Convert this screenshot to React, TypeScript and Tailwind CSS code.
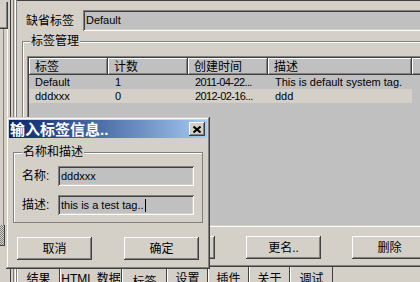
const raised =
  'shadow-[inset_-1px_-1px_0_#404040,inset_1px_1px_0_#ffffff,inset_-2px_-2px_0_#808080]'
const sunken =
  'shadow-[inset_1px_1px_0_#808080,inset_-1px_-1px_0_#ffffff,inset_2px_2px_0_#404040,inset_-2px_-2px_0_#d4d0c8]'
const etched = 'border-t border-l border-[#808080] shadow-[inset_1px_1px_0_#ffffff]'

const columns = [
  { label: '标签', w: 'w-[79px]' },
  { label: '计数', w: 'w-[80px]' },
  { label: '创建时间', w: 'w-[80px]' },
  { label: '描述', w: 'w-[144px]' },
]

const rows = [
  { tag: 'Default', count: '1', created: '2011-04-22...', desc: 'This is default system tag.', active: false },
  { tag: 'dddxxx', count: '0', created: '2012-02-16...', desc: 'ddd', active: true },
]

const tabs = [
  { label: '结果', w: 'w-[43px]' },
  { label: 'HTML 数据', w: 'w-[62px]' },
  { label: '标签', w: 'w-[45px]', current: true },
  { label: '设置', w: 'w-[41px]' },
  { label: '插件', w: 'w-[41px]' },
  { label: '关于', w: 'w-[41px]' },
  { label: '调试', w: 'w-[43px]' },
]

function Button({ label, className = '' }: { label: string; className?: string }) {
  return (
    <div className={`flex h-[23px] w-[75px] shrink-0 items-center justify-center bg-[#d4d0c8] text-[12px] ${raised} ${className}`}>
      {label}
    </div>
  )
}

function LeftStrip() {
  return (
    <div className="flex h-full w-[17px] shrink-0">
      <div className="flex w-[8px] flex-col">
        <div className="h-[2px]" />
        <div className="h-[27px] border-r border-b border-[#404040] shadow-[inset_-1px_-1px_0_#808080]" />
        <div className="ml-[3px] w-[5px] flex-1 border-l border-[#808080] border-r border-r-white" />
        <div className="h-[21px] w-[5px] border-r border-b border-[#404040] bg-[repeating-conic-gradient(#808080_0_25%,#d4d0c8_0_50%)] bg-[length:2px_2px]" />
        <div className="h-[36px]" />
      </div>
      <div className="w-[2px]" />
      <div className="w-[1px] bg-[#404040]" />
      <div className="w-[2px]" />
      <div className="w-[1px] bg-[#808080]" />
      <div className="w-[1px]" />
      <div className="w-[1px] bg-white" />
      <div className="w-[1px] bg-[#808080]" />
    </div>
  )
}

function TagList() {
  return (
    <div className={`mt-[14px] ml-[4px] flex h-[171px] flex-col bg-[#c0c0c0] p-[2px] ${sunken}`}>
      <div className="flex h-[17px] shrink-0">
        {columns.map((c) => (
          <div key={c.label} className={`flex items-center pl-[6px] text-[12px] leading-[12px] ${c.w} ${raised}`}>
            {c.label}
          </div>
        ))}
        <div className={`flex-1 ${raised}`} />
      </div>
      {rows.map((r) => (
        <div
          key={r.tag}
          className={`flex h-[14px] w-[383px] items-center text-[11px] leading-[14px] ${r.active ? 'bg-[#d4d0c8]' : ''}`}
        >
          <span className="w-[79px] pl-[6px]">{r.tag}</span>
          <span className="w-[80px] pl-[7px]">{r.count}</span>
          <span className="w-[80px] pl-[7px] tracking-[-0.6px]">{r.created}</span>
          <span className="w-[144px] pl-[7px]">{r.desc}</span>
        </div>
      ))}
    </div>
  )
}

function TagDialog() {
  return (
    <div
      className={`absolute top-[117px] left-[6px] flex h-[152px] w-[204px] flex-col bg-[#d4d0c8] p-[3px] shadow-[inset_-1px_-1px_0_#404040,inset_1px_1px_0_#d4d0c8,inset_-2px_-2px_0_#808080,inset_2px_2px_0_#ffffff]`}
    >
      <div className="flex h-[18px] shrink-0 items-center justify-between bg-linear-to-r from-[#0a246a] to-[#a6caf0] pl-[1px] pr-[2px]">
        <span className="text-[15px] leading-[15px] font-bold text-white">输入标签信息..</span>
        <div className={`flex h-[14px] w-[16px] items-center justify-center bg-[#d4d0c8] ${raised}`}>
          <svg width="8" height="7" viewBox="0 0 8 7">
            <path d="M0.5 0.5 L7.5 6.5 M7.5 0.5 L0.5 6.5" stroke="#000" strokeWidth="2" />
          </svg>
        </div>
      </div>

      <div className={`relative mx-[4px] mt-[14px] flex h-[71px] flex-col gap-[9px] pt-[13px] pl-[8px] ${etched} border-r border-b shadow-[inset_1px_1px_0_#ffffff,1px_1px_0_#ffffff]`}>
        <span className="absolute -top-[8px] left-[8px] bg-[#d4d0c8] px-[1px] text-[12px] leading-[14px]">名称和描述</span>
        <div className="flex items-center">
          <span className="w-[36px] text-[12px]">名称:</span>
          <div className={`flex h-[20px] w-[136px] items-center bg-[#c0c0c0] pl-[3px] text-[11px] ${sunken}`}>dddxxx</div>
        </div>
        <div className="flex items-center">
          <span className="w-[36px] text-[12px]">描述:</span>
          <div className={`flex h-[20px] w-[136px] items-center bg-[#c0c0c0] pl-[3px] text-[11px] ${sunken}`}>
            this is a test tag..
            <span className="ml-[1px] h-[13px] w-[1px] bg-black" />
          </div>
        </div>
      </div>

      <div className="mt-[14px] ml-[8px] flex gap-[32px]">
        <Button label="取消" className="h-[22px]" />
        <Button label="确定" className="h-[22px]" />
      </div>
    </div>
  )
}

export default function App() {
  return (
    <div className="relative flex h-[282px] w-[420px] overflow-hidden bg-[#d4d0c8] font-['Liberation_Sans','Noto_Sans_CJK_SC',sans-serif] text-black">
      <LeftStrip />

      <div className="flex w-[440px] shrink-0 flex-col">
        <div className="flex flex-1 flex-col border-t border-[#404040]">
          {/* default tag */}
          <div className="flex items-center pt-[9px] pl-[9px]">
            <span className="w-[57px] text-[12px]">缺省标签</span>
            <div className={`flex h-[21px] flex-1 items-center bg-[#c0c0c0] pl-[3px] text-[11px] ${sunken}`}>Default</div>
          </div>

          {/* tag management group */}
          <div className={`relative mt-[10px] ml-[5px] flex flex-1 flex-col ${etched}`}>
            <span className="absolute -top-[8px] left-[7px] bg-[#d4d0c8] px-[1px] text-[12px] leading-[14px]">标签管理</span>
            <TagList />
            <div className="mt-[9px] ml-[11px] flex gap-[31px]">
              <Button label="新建.." />
              <Button label="编辑.." />
              <Button label="更名.." />
              <Button label="删除" />
            </div>
          </div>
        </div>

        <div className="h-[1px] bg-[#808080]" />
        <div className="h-[1px] bg-[#404040]" />

        <div className="flex h-[15px]">
          {tabs.map((t) => (
            <div
              key={t.label}
              className={`flex justify-center border-l border-white border-r border-r-[#404040] text-[12px] leading-[12px] ${t.w} ${t.current ? 'pt-[9px]' : 'pt-[6px]'}`}
            >
              {t.label}
            </div>
          ))}
        </div>
      </div>

      <TagDialog />
    </div>
  )
}
